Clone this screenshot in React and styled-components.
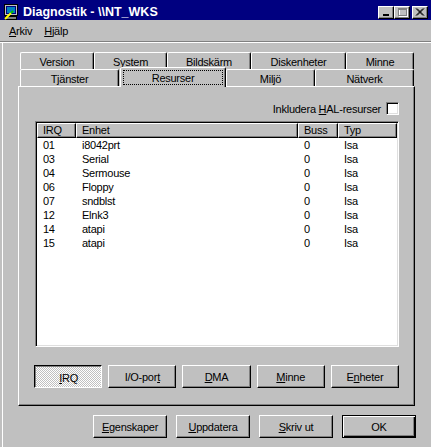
import React from 'react';
import styled, { createGlobalStyle } from 'styled-components';

const GlobalStyle = createGlobalStyle`
  html, body {
    margin: 0;
    padding: 0;
    background: #c0c0c0;
  }
  body {
    font-family: "Liberation Sans", Arial, sans-serif;
    font-size: 11px;
    letter-spacing: -0.25px;
    color: #000;
  }
  * {
    box-sizing: border-box;
  }
`;

const Window = styled.div`
  width: 431px;
  height: 447px;
  background: #c0c0c0;
  display: flex;
  flex-direction: column;
  overflow: hidden;
`;

// barre de titre
const TitleBar = styled.div`
  height: 20px;
  background: #000080;
  display: flex;
  align-items: center;
  padding: 3px 3px 0 3px;
  svg {
    flex-shrink: 0;
  }
`;

const TitleText = styled.span`
  color: #fff;
  font-weight: bold;
  font-size: 12.5px;
  letter-spacing: 0;
  margin-left: 4px;
`;

const Controls = styled.div`
  margin-left: auto;
  align-self: flex-end;
  margin-bottom: 1px;
  display: flex;
`;

const CaptionButton = styled.div`
  width: 16px;
  height: 13px;
  margin-left: ${({ $gap }) => $gap || 0}px;
  background: #c0c0c0;
  border: 1px solid;
  border-color: #fff #000 #000 #fff;
  box-shadow: inset -1px -1px #808080;
  display: flex;
  align-items: center;
  justify-content: center;
`;

const MenuBar = styled.div`
  height: 20px;
  display: flex;
  align-items: center;
  padding: 2px 0 0 3px;
`;

const MenuItem = styled.span`
  padding: 0 6px;
`;

const Key = styled.span`
  text-decoration: underline;
`;

const Separator = styled.div`
  margin-top: 1px;
  height: 2px;
  border-top: 1px solid #808080;
  border-bottom: 1px solid #fff;
`;

const Client = styled.div`
  flex: 1;
  margin-left: 2px;
  border-left: 1px solid #fff;
  padding: 9px 15px 0 15px;
  display: flex;
  flex-direction: column;
`;

// onglets
const TabRow = styled.div`
  display: flex;
  align-items: flex-start;
  height: 17px;
  margin-left: 2px;
  position: relative;
  z-index: ${({ $front }) => ($front ? 2 : 0)};
`;

const Tab = styled.div`
  width: ${({ $w }) => $w}px;
  height: ${({ $active }) => ($active ? 20 : 17)}px;
  margin-top: ${({ $active }) => ($active ? -2 : 0)}px;
  margin-left: ${({ $ml }) => $ml || 0}px;
  padding: ${({ $active }) => ($active ? '2px 2px 2px 2px' : '1px 0 0 0')};
  background: #c0c0c0;
  border-top: 1px solid #fff;
  border-left: 1px solid #fff;
  border-right: 1px solid #000;
  border-radius: 2px 2px 0 0;
  box-shadow: inset -1px 0 #808080;
  display: flex;
  align-items: center;
  justify-content: center;
`;

const TabLabel = styled.span`
  flex: 1;
  height: 100%;
  display: flex;
  align-items: center;
  justify-content: center;
  border: 1px dotted ${({ $focus }) => ($focus ? '#000' : 'transparent')};
`;

const Panel = styled.div`
  width: 397px;
  height: 320px;
  border: 1px solid;
  border-color: #fff #000 #000 #fff;
  box-shadow: inset -1px -1px #808080;
  padding: 15px 15px 0 15px;
  display: flex;
  flex-direction: column;
`;

const CheckRow = styled.label`
  height: 13px;
  display: flex;
  justify-content: flex-end;
  align-items: center;
  gap: 5px;
`;

const CheckBox = styled.span`
  width: 13px;
  height: 13px;
  background: #fff;
  border: 1px solid;
  border-color: #808080 #fff #fff #808080;
  box-shadow: inset 1px 1px #000, inset -1px -1px #dfdfdf;
`;

const ListBox = styled.div`
  width: 364px;
  height: 226px;
  margin: 6px 0 0 1px;
  padding: 1px;
  background: #fff;
  border: 1px solid;
  border-color: #808080 #fff #fff #808080;
  box-shadow: inset 1px 1px #000, inset -1px -1px #dfdfdf;
`;

const Columns = styled.div`
  display: grid;
  grid-template-columns: 39px 222px 40px 59px;
  height: ${({ $header }) => ($header ? 15 : 14)}px;
  background: ${({ $header }) => ($header ? '#c0c0c0' : 'transparent')};
`;

const HeadCell = styled.div`
  padding-left: 5px;
  border: 1px solid;
  border-color: #fff #000 #000 #fff;
  box-shadow: inset -1px -1px #808080;
  line-height: 13px;
`;

const Cell = styled.div`
  padding-left: 6px;
  line-height: 14px;
  white-space: nowrap;
`;

const ButtonRow = styled.div`
  display: flex;
  gap: ${({ $gap }) => $gap}px;
  margin-top: ${({ $top }) => $top}px;
  justify-content: ${({ $end }) => ($end ? 'flex-end' : 'flex-start')};
`;

const Button = styled.div`
  width: ${({ $w }) => $w}px;
  height: 23px;
  display: flex;
  align-items: center;
  justify-content: center;
  border: 1px solid;
  border-color: ${({ $pressed }) => ($pressed ? '#000 #fff #fff #000' : '#fff #000 #000 #fff')};
  box-shadow: ${({ $pressed }) => ($pressed ? 'inset 1px 1px #808080' : 'inset -1px -1px #808080')};
  background: ${({ $pressed }) => ($pressed
    ? 'repeating-conic-gradient(#c0c0c0 0% 25%, #ffffff 0% 50%) 0 0 / 2px 2px'
    : '#c0c0c0')};
  padding-top: ${({ $pressed }) => ($pressed ? 2 : 0)}px;
  padding-left: ${({ $pressed }) => ($pressed ? 1 : 0)}px;
`;

const DefaultButton = styled(Button)`
  border-color: #000;
  box-shadow: inset 1px 1px #fff, inset -1px -1px #000, inset -2px -2px #808080;
`;

const AppIcon = () => (
  <svg width="16" height="16" viewBox="0 0 16 16">
    <rect x="1.5" y="0.5" width="13" height="11" fill="#c0c0c0" stroke="#000" />
    <rect x="3" y="2" width="10" height="8" fill="#000080" />
    <rect x="4" y="3" width="8" height="6" fill="#0080c0" />
    <rect x="2.5" y="12.5" width="11" height="3" fill="#808080" stroke="#000" />
    <path d="M2 15 L8 9" stroke="#ffff00" strokeWidth="2" />
    <path d="M8 9 L10 7" stroke="#00c000" strokeWidth="2" />
  </svg>
);

const MinGlyph = () => (
  <svg width="12" height="9" viewBox="0 0 12 9">
    <rect x="3" y="6" width="6" height="2" fill="#000" />
  </svg>
);

const MaxGlyph = () => (
  <svg width="12" height="9" viewBox="0 0 12 9">
    <rect x="3.5" y="1.5" width="8" height="7" fill="none" stroke="#fff" />
    <rect x="2.5" y="0.5" width="8" height="7" fill="none" stroke="#808080" />
    <rect x="2" y="1" width="9" height="1" fill="#808080" />
  </svg>
);

const CloseGlyph = () => (
  <svg width="12" height="9" viewBox="0 0 12 9">
    <path d="M2 0.5 L9 7.5 M3 0.5 L10 7.5 M9 0.5 L2 7.5 M10 0.5 L3 7.5" stroke="#000" strokeWidth="1" />
  </svg>
);

const backTabs = [
  { label: 'Version', w: 74 },
  { label: 'System', w: 73 },
  { label: 'Bildskärm', w: 84 },
  { label: 'Diskenheter', w: 95 },
  { label: 'Minne', w: 68 },
];

const frontTabs = [
  { label: 'Tjänster', w: 99 },
  { label: 'Resurser', w: 106, active: true },
  { label: 'Miljö', w: 89 },
  { label: 'Nätverk', w: 99 },
];

const resources = [
  { irq: '01', device: 'i8042prt' },
  { irq: '03', device: 'Serial' },
  { irq: '04', device: 'Sermouse' },
  { irq: '06', device: 'Floppy' },
  { irq: '07', device: 'sndblst' },
  { irq: '12', device: 'Elnk3' },
  { irq: '14', device: 'atapi' },
  { irq: '15', device: 'atapi' },
];

const App = () => (
  <>
    <GlobalStyle />
    <Window>
      <TitleBar>
        <AppIcon />
        <TitleText>{'Diagnostik - \\\\NT_WKS'}</TitleText>
        <Controls>
          <CaptionButton><MinGlyph /></CaptionButton>
          <CaptionButton><MaxGlyph /></CaptionButton>
          <CaptionButton $gap={2}><CloseGlyph /></CaptionButton>
        </Controls>
      </TitleBar>
      <MenuBar>
        <MenuItem><Key>A</Key>rkiv</MenuItem>
        <MenuItem><Key>H</Key>jälp</MenuItem>
      </MenuBar>
      <Separator />
      <Client>
        <TabRow>
          {backTabs.map((tab) => (
            <Tab key={tab.label} $w={tab.w}>{tab.label}</Tab>
          ))}
        </TabRow>
        <TabRow $front>
          {frontTabs.map((tab) => (
            <Tab key={tab.label} $w={tab.w} $active={tab.active} $ml={tab.active ? 1 : 0}>
              <TabLabel $focus={tab.active}>{tab.label}</TabLabel>
            </Tab>
          ))}
        </TabRow>
        <Panel>
          <CheckRow>
            <span>Inkludera <Key>H</Key>AL-resurser</span>
            <CheckBox />
          </CheckRow>
          <ListBox>
            <Columns $header>
              <HeadCell>IRQ</HeadCell>
              <HeadCell>Enhet</HeadCell>
              <HeadCell>Buss</HeadCell>
              <HeadCell>Typ</HeadCell>
            </Columns>
            {resources.map((row) => (
              <Columns key={row.irq}>
                <Cell>{row.irq}</Cell>
                <Cell>{row.device}</Cell>
                <Cell>0</Cell>
                <Cell>Isa</Cell>
              </Columns>
            ))}
          </ListBox>
          <ButtonRow $gap={6} $top={18}>
            <Button $w={69} $pressed><span><Key>I</Key>RQ</span></Button>
            <Button $w={69}><span>I/O-por<Key>t</Key></span></Button>
            <Button $w={69}><span><Key>D</Key>MA</span></Button>
            <Button $w={69}><span><Key>M</Key>inne</span></Button>
            <Button $w={69}><span>E<Key>n</Key>heter</span></Button>
          </ButtonRow>
        </Panel>
        <ButtonRow $gap={9} $top={9} $end>
          <Button $w={74}><span><Key>E</Key>genskaper</span></Button>
          <Button $w={74}><span><Key>U</Key>ppdatera</span></Button>
          <Button $w={74}><span><Key>S</Key>kriv ut</span></Button>
          <DefaultButton $w={74}>OK</DefaultButton>
        </ButtonRow>
      </Client>
    </Window>
  </>
);

export default App;
